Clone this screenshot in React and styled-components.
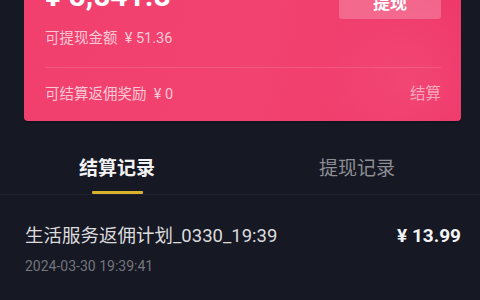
import React from "react";
import styled, { createGlobalStyle } from "styled-components";

const GlobalStyle = createGlobalStyle`
  html, body {
    margin: 0;
    padding: 0;
    background: #161823;
    font-family: Roboto, "Noto Sans CJK SC", "Noto Sans", sans-serif;
    overflow: hidden;
  }
`;

const Page = styled.div`
  width: 480px;
  height: 300px;
  background: #161823;
  overflow: hidden;
`;

const Card = styled.div`
  margin: -58px 19px 0 24px;
  padding: 0 20px 5px 21px;
  border-radius: 4px;
  background:
    radial-gradient(circle at 88% 78%, rgba(255, 120, 160, 0.18) 0, rgba(255, 120, 160, 0) 22%),
    linear-gradient(100deg, #f1406e 0%, #f2426f 55%, #ee386a 100%);
  box-shadow: 0 2px 0 rgba(0, 0, 0, 0.15);
`;

const TopRow = styled.div`
  display: flex;
  justify-content: space-between;
  align-items: flex-end;
  height: 77px;
`;

const Amount = styled.div`
  font-family: Roboto, "Noto Sans CJK SC", sans-serif;
  font-size: 30px;
  font-weight: 700;
  color: #fff;
  line-height: 30px;
  margin-bottom: 8px;
`;

const WithdrawButton = styled.div`
  width: 102px;
  height: 36px;
  display: flex;
  align-items: center;
  justify-content: center;
  background: rgba(255, 255, 255, 0.22);
  border-radius: 3px;
  color: #fff;
  font-size: 17px;
  font-weight: 700;
`;

const Line = styled.div`
  font-size: 14.5px;
  color: rgba(255, 255, 255, 0.72);
  display: flex;
  align-items: center;
  justify-content: space-between;
  height: ${(p) => p.h}px;
`;

const Action = styled.span`
  font-size: 15.5px;
  color: rgba(255, 255, 255, 0.55);
`;

const Divider = styled.div`
  height: 1px;
  background: rgba(255, 255, 255, 0.13);
`;

const Tabs = styled.div`
  display: grid;
  grid-template-columns: 1fr 1fr;
  margin-top: 30px;
  border-bottom: 1px solid #1f2130;
`;

const Tab = styled.div`
  display: flex;
  flex-direction: column;
  align-items: center;
  padding-right: 6px;
  font-size: 19px;
  font-weight: ${(p) => (p.$active ? 700 : 400)};
  color: ${(p) => (p.$active ? "#f2f2f3" : "#8d8e94")};
  line-height: 24px;
  padding-top: 6px;
`;

const Underline = styled.div`
  margin-top: 10px;
  width: 51px;
  height: 3px;
  border-radius: 1px;
  background: ${(p) => (p.$active ? "#d9b42a" : "transparent")};
`;

const Record = styled.div`
  padding: 29px 19px 0 25px;
`;

const RecordTop = styled.div`
  display: flex;
  justify-content: space-between;
  align-items: center;
  line-height: 24px;
`;

const RecordTitle = styled.span`
  font-size: 18.5px;
  color: #dcdcde;
`;

const RecordValue = styled.span`
  font-size: 19px;
  font-weight: 700;
  color: #f4f4f5;
`;

const RecordDate = styled.div`
  margin-top: 10px;
  font-size: 14px;
  color: #74757c;
`;

export default function App() {
  return (
    <Page>
      <GlobalStyle />
      <Card>
        <TopRow>
          <Amount>¥ 5,541.8</Amount>
          <WithdrawButton>提现</WithdrawButton>
        </TopRow>
        <Line h={34}>可提现金额&nbsp; ¥ 51.36</Line>
        <Line h={14} />
        <Divider />
        <Line h={48}>
          <span>可结算返佣奖励&nbsp; ¥ 0</span>
          <Action>结算</Action>
        </Line>
      </Card>
      <Tabs>
        <Tab $active>
          结算记录
          <Underline $active />
        </Tab>
        <Tab>
          提现记录
          <Underline />
        </Tab>
      </Tabs>
      <Record>
        <RecordTop>
          <RecordTitle>生活服务返佣计划_0330_19:39</RecordTitle>
          <RecordValue>¥ 13.99</RecordValue>
        </RecordTop>
        <RecordDate>2024-03-30 19:39:41</RecordDate>
      </Record>
    </Page>
  );
}
